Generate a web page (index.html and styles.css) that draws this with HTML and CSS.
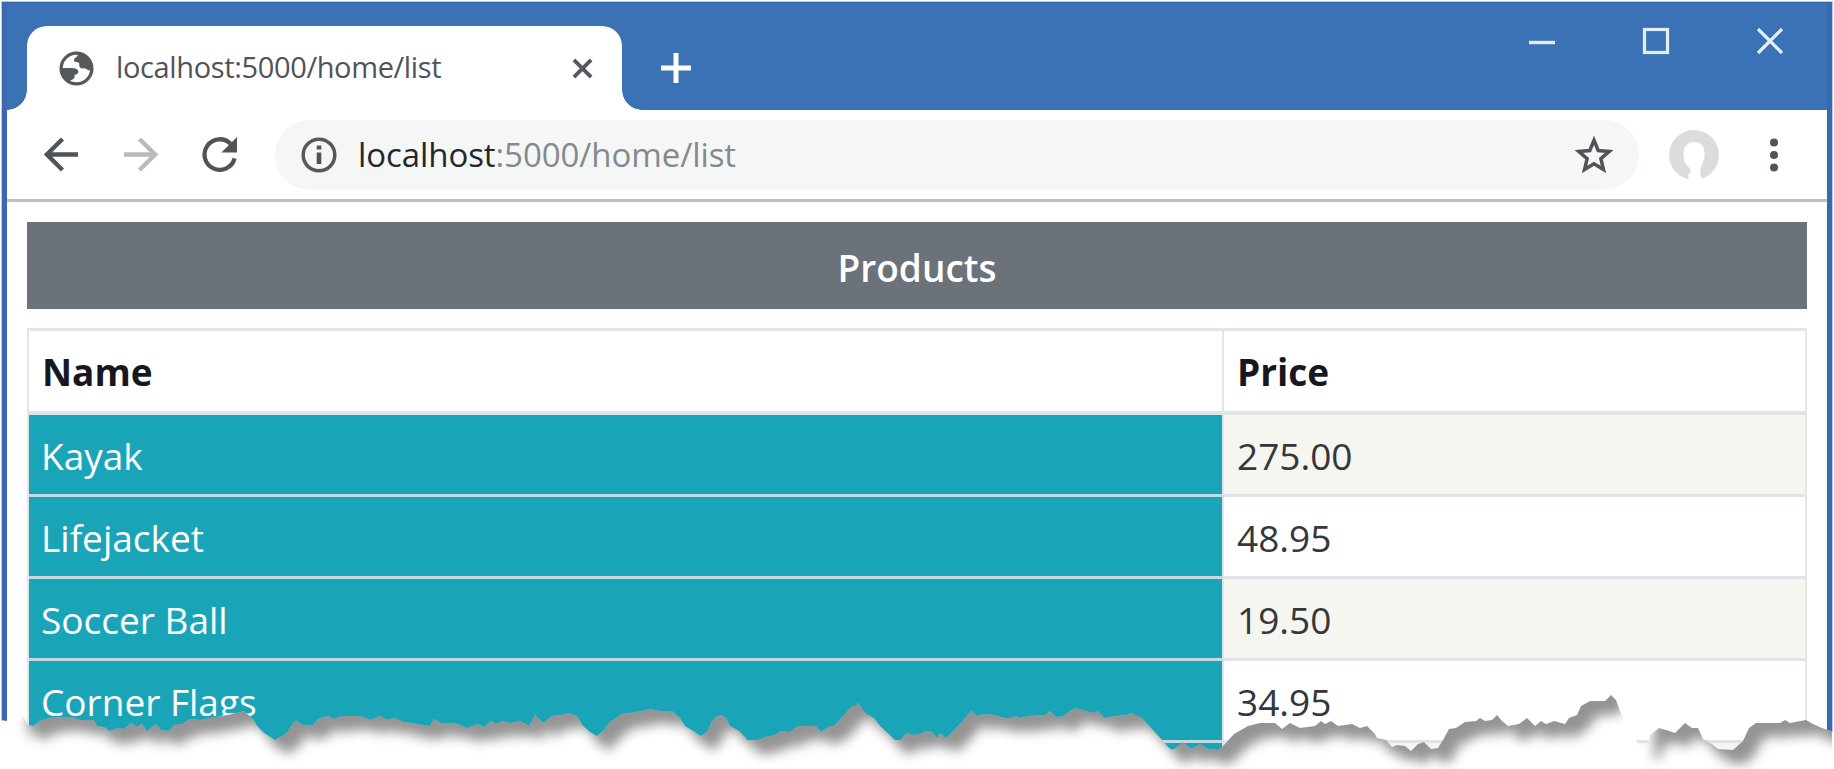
FILE: index.html
```html
<!DOCTYPE html>
<html lang="en">
<head>
<meta charset="utf-8">
<title>localhost:5000/home/list</title>
<link rel="stylesheet" href="styles.css">
</head>
<body>
<div class="window">
  <header class="titlebar">
    <div class="tab">
      <svg class="globe" viewBox="0 0 36 36"><circle cx="18" cy="18" r="15.800" fill="#fff" stroke="#55585c" stroke-width="3.400"/><path d="M19 2Q20 5 17.500 6.500Q14.500 8.500 16 11Q20 11 21 13Q20 16 23 18Q28 17 30 20L34 19A16 16 0 0 0 19 2ZM2 17.500H13Q19 17.500 20 21Q20 24 16 24.500Q17 29 12 30L11 32A16 16 0 0 1 2 17.500Z" fill="#55585c"/></svg>
      <span class="tab-title">localhost:5000/home/list</span>
      <svg class="tab-close" viewBox="0 0 22 22"><path d="M2 2L20 20M20 2L2 20" stroke="#55585c" stroke-width="4" fill="none"/></svg>
    </div>
    <svg class="plus" viewBox="0 0 30 30"><path d="M15 0V30M0 15H30" stroke="#fff" stroke-width="5"/></svg>
    <div class="controls">
      <svg viewBox="0 0 28 28"><path d="M1 15.500H27" stroke="#e4effb" stroke-width="3.400"/></svg>
      <svg viewBox="0 0 28 28"><rect x="2.500" y="2.500" width="23" height="23" fill="none" stroke="#e4effb" stroke-width="3.200"/></svg>
      <svg viewBox="0 0 28 28"><path d="M2 2L26 26M26 2L2 26" stroke="#e4effb" stroke-width="3.200"/></svg>
    </div>
  </header>
  <nav class="toolbar">
    <svg class="nav-icon" viewBox="0 0 36 36"><path d="M35 18H3M19 2L3 18L19 34" fill="none" stroke="#505358" stroke-width="4.500"/></svg>
    <svg class="nav-icon" viewBox="0 0 36 36"><path d="M1 18H33M17 2L33 18L17 34" fill="none" stroke="#b9babb" stroke-width="4.500"/></svg>
    <svg class="nav-icon" viewBox="0 0 36 36"><path d="M33.500 22A15.700 15.700 0 1 1 29.500 7" fill="none" stroke="#505358" stroke-width="4.400"/><path d="M36 0V16H20Z" fill="#505358"/></svg>
    <div class="address">
      <svg class="info" viewBox="0 0 36 36"><circle cx="18" cy="18" r="15.800" fill="none" stroke="#55585c" stroke-width="3.500"/><path d="M18 15.500V27M18 8.500V12.500" stroke="#505358" stroke-width="4.600"/></svg>
      <span class="url"><b>localhost</b>:5000/home/list</span>
      <svg class="star" viewBox="0 0 36 36"><path d="M18 4L22 13.800L32.500 14.600L24.500 21.500L27 31.800L18 26.300L9 31.800L11.500 21.500L3.500 14.600L14 13.800Z" fill="none" stroke="#505358" stroke-width="3.300"/></svg>
    </div>
    <svg class="avatar" viewBox="0 0 50 50"><circle cx="25" cy="25" r="25" fill="#dbdcdd"/><path d="M25 12C18 12 14.500 17 14.500 24C14.500 30 16 34 19.500 37Q24 40 19 46L20 50H33L32 46Q30 40 33 34C35 30 36 27 35.500 22C35 15 31 12 25 12Z" fill="#fff"/></svg>
    <svg class="menu" viewBox="0 0 10 34"><circle cx="5" cy="4.500" r="4"/><circle cx="5" cy="17" r="4"/><circle cx="5" cy="29.500" r="4"/></svg>
  </nav>
  <main class="page">
    <h1 class="banner"><span>Products</span></h1>
    <div class="table">
      <div class="row head"><div class="cell">Name</div><div class="cell">Price</div></div>
      <div class="row odd"><div class="cell name">Kayak</div><div class="cell">275.00</div></div>
      <div class="row"><div class="cell name">Lifejacket</div><div class="cell">48.95</div></div>
      <div class="row odd"><div class="cell name">Soccer Ball</div><div class="cell">19.50</div></div>
      <div class="row"><div class="cell name">Corner Flags</div><div class="cell">34.95</div></div>
      <div class="row odd"><div class="cell name"></div><div class="cell"></div></div>
    </div>
  </main>
</div>
<svg class="tear" viewBox="0 650 1834 119">
  <defs>
    <filter id="soft" x="-5%" y="-30%" width="110%" height="160%"><feGaussianBlur stdDeviation="6"/></filter>
    <clipPath id="below"><path id="edge" d="M0 720L7 721L20 722L23 716L28 725L33 726L40 721L50 718L62 717L72 717L80 720L94 720L97 726L104 727L110 731L118 728L124 729L131 723L137 727L142 724L147 731L156 724L161 730L169 731L174 725L182 724L190 719L200 720L210 718L222 716L232 714L244 711L252 718L258 727L264 733L275 740L287 733L293 723L296 721L303 725L313 725L318 719L328 716L334 719L342 716L355 716L364 717L370 720L380 716L387 720L394 718L404 722L417 724L430 726L434 719L441 723L455 723L467 728L478 724L484 727L491 721L496 724L502 721L510 723L520 721L529 726L535 715L543 723L552 716L562 715L568 713L577 716L583 726L590 732L597 736L603 731L610 722L622 714L636 712L651 709L660 711L672 711L680 718L685 726L693 731L701 736L708 731L712 721L716 717L721 715L726 718L730 726L739 731L745 737L747 740L758 740L766 737L775 735L781 731L790 732L798 726L816 726L821 732L828 727L834 726L846 713L852 706L856 706L858 703L862 709L866 714L874 718L880 726L895 740L901 740L906 733L912 735L920 734L926 731L932 732L937 738L940 733L946 738L957 727L966 717L971 711L977 716L984 714L994 715L1004 718L1011 718L1016 716L1020 718L1030 716L1045 715L1050 711L1056 717L1064 716L1070 711L1076 708L1085 711L1095 713L1098 711L1104 718L1115 716L1127 715L1131 713L1142 718L1150 727L1163 741L1168 747L1172 750L1176 748L1183 742L1191 749L1200 744L1208 749L1218 750L1224 745L1234 734L1248 726L1260 723L1275 723L1282 729L1290 723L1300 728L1315 726L1321 721L1325 724L1331 721L1338 726L1352 724L1360 728L1367 726L1375 734L1377 738L1386 740L1392 747L1397 745L1405 746L1411 751L1418 744L1424 742L1431 749L1438 748L1443 740L1449 729L1456 728L1465 722L1476 721L1480 718L1485 721L1492 720L1497 715L1502 721L1508 726L1519 724L1527 718L1535 726L1541 721L1546 724L1554 721L1565 724L1569 718L1577 715L1581 706L1590 701L1605 701L1611 695L1616 700L1620 711L1625 722L1627 738L1636 739L1637 745L1648 745L1650 735L1659 728L1666 730L1675 733L1685 723L1692 728L1698 728L1703 739L1712 744L1718 749L1733 750L1743 741L1749 728L1756 723L1780 723L1785 720L1790 723L1806 720L1813 724L1822 728L1834 732V769H0Z"/></clipPath>
    <mask id="paper" maskUnits="userSpaceOnUse" x="0" y="600" width="1834" height="169"><rect y="600" width="1834" height="169" fill="#fff"/><use href="#edge" fill="#000"/><rect y="600" width="16" height="169" fill="#000"/><rect x="1613" y="600" width="29" height="169" fill="#000"/></mask>
  </defs>
  <g clip-path="url(#below)">
    <rect y="650" width="1834" height="119" fill="#fff"/>
    <g filter="url(#soft)" transform="translate(12 14)"><rect y="600" width="1834" height="169" fill="#000" opacity=".42" mask="url(#paper)"/></g>
    <rect x="1832" y="650" width="2" height="119" fill="#fff"/>
  </g>
</svg>
</body>
</html>
```
FILE: styles.css
```css
* { box-sizing: border-box; }
body { margin: 0; width: 1834px; height: 769px; overflow: hidden; position: relative; background: #fff; font-family: "Open Sans", "Noto Sans", sans-serif; }
svg { display: block; flex: none; }
.window { margin: 2px 2px 0; width: 1830px; height: 767px; border: 5px solid #3a69b0; border-top: 1px solid #3a69b0; border-bottom: 0; overflow: hidden; outline: 1px solid #b4cbe6; }
.titlebar { height: 107px; background: #3a72b5; display: flex; padding: 23px 0 0 20px; }
.tab { position: relative; width: 595px; height: 84px; background: #fff; border-radius: 20px 20px 0 0; display: flex; align-items: center; padding: 0 29px 0 32px; }
.tab::before, .tab::after { content: ""; position: absolute; bottom: 0; width: 20px; height: 20px; }
.tab::before { right: 100%; background: radial-gradient(circle at 0 0, transparent 19.5px, #fff 20px); }
.tab::after { left: 100%; background: radial-gradient(circle at 100% 0, transparent 19.5px, #fff 20px); }
.globe { width: 35px; height: 35px; }
.tab-title { margin: -3px 0 0 22px; font-size: 29px; letter-spacing: -0.36px; color: #505358; white-space: nowrap; flex: 1; }
.tab-close { width: 21px; height: 21px; }
.plus { width: 30px; height: 30px; margin: 27px 0 0 39px; }
.controls { margin-left: auto; display: flex; gap: 86px; padding: 1px 43px 0 0; }
.controls svg { width: 28px; height: 28px; }
.toolbar { height: 92px; border-bottom: 3px solid #bfbfbf; display: flex; align-items: center; padding-left: 37px; }
.nav-icon { width: 35px; height: 35px; margin-right: 44px; }
.address { width: 1364px; height: 70px; margin-left: -6px; border-radius: 35px; background: #f5f6f6; display: flex; align-items: center; padding: 0 26px 0 26px; }
.info { width: 36px; height: 36px; }
.url { flex: 1; margin-left: 21px; font-size: 33px; letter-spacing: -0.08px; color: #85898e; white-space: nowrap; }
.url b { font-weight: 400; color: #25272b; }
.star { width: 38px; height: 38px; }
.avatar { width: 50px; height: 50px; margin-left: 30px; }
.menu { width: 10px; height: 34px; margin-left: 50px; fill: #505358; }
.page { padding: 20px 20px 0; }
.banner { margin: 0; height: 87px; background: #6b727a; color: #fff; display: flex; align-items: center; justify-content: center; font-size: 37px; font-weight: 600; padding-top: 3px; }
.table { margin-top: 19px; border-top: 3px solid #e3e5e9; border-left: 2px solid #e3e5e9; }
.row { display: grid; grid-template-columns: 1195px 583px; height: 82px; }
.cell { border-right: 2px solid #e3e5e9; border-bottom: 3px solid #e0e3e7; padding: 1px 0 0 13px; display: flex; align-items: center; font-size: 37px; color: #34373c; }
.name { background: #1aa4b8; color: #fff; border-bottom-color: #c5d9e0; padding-left: 12px; }
.odd .cell:last-child { background: #f6f6f0; }
.head { height: 84px; }
.head .cell { font-weight: 700; color: #17181f; border-bottom-width: 4px; }
.tear { position: absolute; left: 0; top: 650px; width: 1834px; height: 119px; }
```
